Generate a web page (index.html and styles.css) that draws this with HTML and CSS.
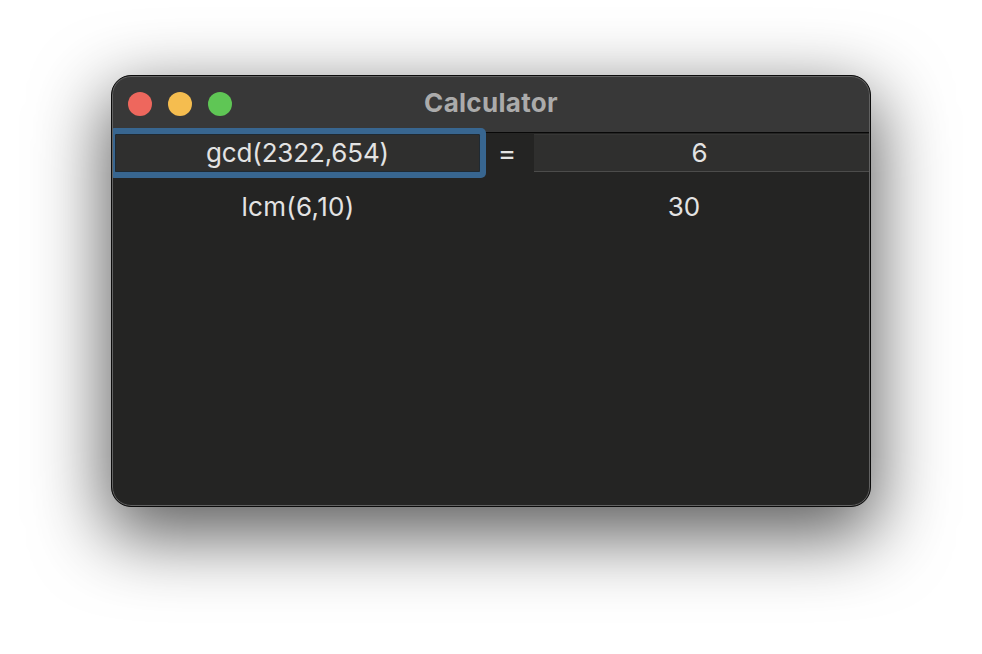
FILE: index.html
```html
<!DOCTYPE html>
<html lang="en">
<head>
<meta charset="utf-8">
<title>Calculator</title>
<link rel="stylesheet" href="styles.css">
</head>
<body>
<div class="window">
  <header class="titlebar">
    <div class="lights">
      <span class="light red"></span>
      <span class="light yellow"></span>
      <span class="light green"></span>
    </div>
    <div class="title">Calculator</div>
  </header>
  <main class="content">
    <div class="row row-first">
      <div class="field field-focus">gcd(2322,654)</div>
      <div class="equals">=</div>
      <div class="field field-result">6</div>
    </div>
    <div class="row row-second">
      <div class="cell-left">lcm(6,10)</div>
      <div class="cell-right">30</div>
    </div>
  </main>
</div>
</body>
</html>
```
FILE: styles.css
```css
html, body {
  margin: 0;
  height: 100%;
}
body {
  background: #fff;
  overflow: hidden;
  font-family: Inter, "Liberation Sans", sans-serif;
}
.window {
  position: absolute;
  left: 111px;
  top: 75px;
  width: 760px;
  height: 432px;
  box-sizing: border-box;
  border: 1px solid #0c0c0c;
  border-radius: 20px;
  background: #242423;
  box-shadow: 0 24px 72px 5px rgba(0,0,0,.64);
  padding: 1px;
  overflow: hidden;
  display: flex;
  flex-direction: column;
}
.window::after {
  content: "";
  position: absolute;
  inset: 0;
  border-radius: 19px;
  border: 1px solid #626262;
  pointer-events: none;
}
.titlebar {
  height: 56px;
  box-sizing: border-box;
  flex: none;
  background: #383838;
  border-bottom: 1px solid #080808;
  display: flex;
  align-items: center;
  justify-content: center;
  position: relative;
}
.lights {
  position: absolute;
  left: 15px;
  top: 15px;
  display: flex;
  gap: 16px;
}
.light {
  width: 24px;
  height: 24px;
  border-radius: 50%;
}
.red { background: #ee675d; }
.yellow { background: #f5bd4f; }
.green { background: #5fc655; }
.title {
  color: #ababab;
  font-size: 26px;
  font-weight: 700;
  letter-spacing: 0.3px;
  margin-top: -5px;
}
.content {
  flex: 1;
  position: relative;
  color: #e3e3e3;
  font-size: 26px;
}
.row {
  display: flex;
  align-items: center;
}
.row-first {
  height: 38px;
  margin-top: 1px;
}
.field {
  height: 38px;
  line-height: 38px;
  text-align: center;
  background: #2f2f2e;
  box-sizing: border-box;
}
.field-focus {
  width: 365px;
  margin-left: 2px;
  box-shadow: 0 0 0 6px #386690, inset 0 0 0 1px #1f2a33;
  border-radius: 1.5px;
  letter-spacing: -0.15px;
  line-height: 37px;
}
.equals {
  width: 54px;
  line-height: 37px;
  font-size: 28px;
  text-align: center;
}
.field-result {
  flex: 1;
  line-height: 35px;
  padding-right: 4px;
  border-bottom: 1px solid #4c4c4b;
  border-top: 1px solid #363635;
}
.row-second {
  height: 68px;
}
.cell-left {
  width: 370px;
  text-align: center;
  letter-spacing: 0.3px;
}
.cell-right {
  flex: 1;
  text-align: center;
  padding-left: 16px;
}
```
